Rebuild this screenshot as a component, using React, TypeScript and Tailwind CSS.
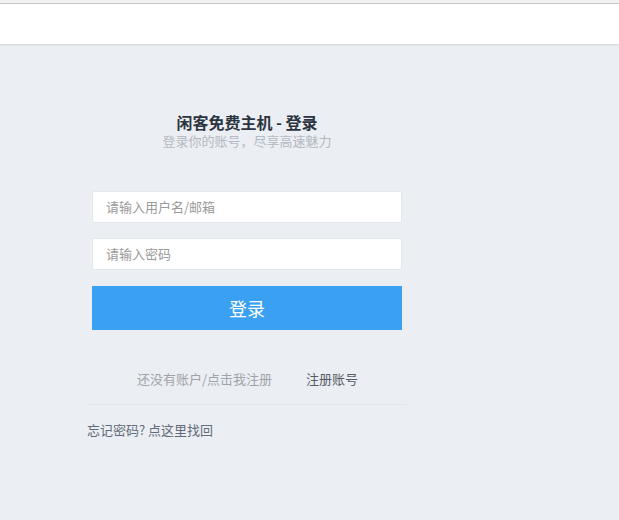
import React from "react";

export default function App() {
  const font = { fontFamily: '"Microsoft YaHei", "Noto Sans CJK SC", "Liberation Sans", sans-serif' };
  return (
    <div className="w-[619px] h-[520px] bg-[#ebeef2] overflow-hidden" style={font}>
      <div className="h-[3px] bg-[#f2f2f2]" />
      <div className="h-px bg-[#c9c9c9]" />
      <div className="h-[40px] bg-white shadow-[0_1px_2px_rgba(0,0,0,0.12)]" />
      <div className="w-[310px] ml-[92px] pt-[68px]">
        <div className="flex flex-col items-center">
          <div className="text-[16px] leading-[20px] font-bold text-[#2b3440]">闲客免费主机 - 登录</div>
          <div className="text-[13px] leading-[18px] text-[#b4bac3]">登录你的账号，尽享高速魅力</div>
        </div>
        <div className="mt-[41px] h-[32px] bg-white border border-[#e4e7ec] rounded-[2px] flex items-center pl-[13px] text-[13px] text-[#9a9a9a]">请输入用户名/邮箱</div>
        <div className="mt-[15px] h-[32px] bg-white border border-[#e4e7ec] rounded-[2px] flex items-center pl-[13px] text-[13px] text-[#9a9a9a]">请输入密码</div>
        <div className="mt-[16px] h-[44px] bg-[#3aa0f2] flex items-center justify-center text-white text-[18px]">登录</div>
      </div>
      <div className="w-[320px] ml-[87px]">
        <div className="mt-[39px] flex items-center text-[13px] leading-[20px]">
          <span className="ml-[50px] text-[#a0a4aa]">还没有账户/点击我注册</span>
          <span className="ml-[34px] text-[#565d68]">注册账号</span>
        </div>
        <div className="mt-[15px] h-px bg-[#e2e5ea]" />
        <div className="mt-[15px] text-[13px] leading-[20px] text-[#626b78]">忘记密码? 点这里找回</div>
      </div>
    </div>
  );
}
